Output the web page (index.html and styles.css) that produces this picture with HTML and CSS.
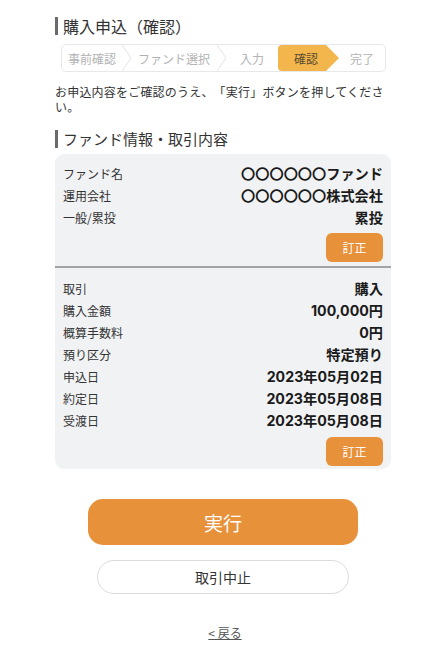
FILE: index.html
```html
<!DOCTYPE html>
<html lang="ja">
<head>
<meta charset="utf-8">
<title>購入申込（確認）</title>
<link rel="stylesheet" href="styles.css">
</head>
<body>
<main class="page">
  <h1 class="heading heading-main">購入申込（確認）</h1>

  <div class="stepper">
    <div class="step step-1">事前確認</div>
    <svg class="chev" viewBox="0 0 9 26" width="9" height="26"><polyline points="0,0 9,13 0,26" fill="none" stroke="#e4e4e4" stroke-width="1"/></svg>
    <div class="step step-2">ファンド選択</div>
    <svg class="chev" viewBox="0 0 9 26" width="9" height="26"><polyline points="0,0 9,13 0,26" fill="none" stroke="#e4e4e4" stroke-width="1"/></svg>
    <div class="step step-3">入力</div>
    <div class="step step-active">確認</div>
    <svg class="arrow" viewBox="0 0 13 26" width="13" height="26"><polygon points="0,0 13,13 0,26" fill="#f3b64c"/></svg>
    <div class="step step-5">完了</div>
  </div>

  <p class="lead">お申込内容をご確認のうえ、「実行」ボタンを押してください。</p>

  <h2 class="heading heading-sub">ファンド情報・取引内容</h2>

  <section class="card">
    <div class="group group-top">
      <div class="row"><span class="label">ファンド名</span><span class="value">〇〇〇〇〇〇ファンド</span></div>
      <div class="row"><span class="label">運用会社</span><span class="value">〇〇〇〇〇〇株式会社</span></div>
      <div class="row"><span class="label">一般/累投</span><span class="value">累投</span></div>
      <div class="actions"><button class="btn-edit">訂正</button></div>
    </div>
    <div class="group group-bottom">
      <div class="row"><span class="label">取引</span><span class="value">購入</span></div>
      <div class="row"><span class="label">購入金額</span><span class="value">100,000円</span></div>
      <div class="row"><span class="label">概算手数料</span><span class="value">0円</span></div>
      <div class="row"><span class="label">預り区分</span><span class="value">特定預り</span></div>
      <div class="row"><span class="label">申込日</span><span class="value">2023年05月02日</span></div>
      <div class="row"><span class="label">約定日</span><span class="value">2023年05月08日</span></div>
      <div class="row"><span class="label">受渡日</span><span class="value">2023年05月08日</span></div>
      <div class="actions"><button class="btn-edit">訂正</button></div>
    </div>
  </section>

  <div class="buttons">
    <button class="btn-primary">実行</button>
    <button class="btn-secondary">取引中止</button>
    <a class="back" href="#">&lt; 戻る</a>
  </div>
</main>
</body>
</html>
```
FILE: styles.css
```css
* { box-sizing: border-box; }

html, body {
  margin: 0;
  padding: 0;
  background: #ffffff;
}

body {
  font-family: "Noto Sans CJK JP", "Noto Sans", sans-serif;
  color: #333333;
  text-spacing-trim: space-all;
}

.page {
  width: 336px;
  margin: 0 auto;
  padding-top: 17px;
}

.heading {
  margin: 0;
  font-weight: normal;
  color: #333333;
  border-left: 3px solid #6a6a6a;
  padding-left: 5px;
  line-height: 18px;
}

.heading-main {
  font-size: 16px;
}

.heading-sub {
  font-size: 15px;
  margin-top: 16px;
}

.stepper {
  display: flex;
  align-items: stretch;
  height: 28px;
  margin: 9px 5px 0 6px;
  border: 1px solid #e8e8e8;
  border-radius: 5px;
  background: #ffffff;
  overflow: hidden;
}

.step {
  display: flex;
  align-items: center;
  justify-content: center;
  font-size: 12px;
  color: #b3b3b3;
  white-space: nowrap;
}

.chev, .arrow {
  flex: none;
  display: block;
}

.step-1 { width: 60px; }
.step-2 { width: 86px; }
.step-3 { width: 52px; }
.step-active {
  width: 48px;
  justify-content: flex-start;
  padding-left: 16px;
  background: #f3b64c;
  color: #5a4a30;
  border-radius: 4px 0 0 4px;
}
.step-5 { flex: 1; }

.lead {
  margin: 12px 0 0;
  font-size: 12px;
  letter-spacing: 0.2px;
  line-height: 15px;
  color: #333333;
  text-spacing-trim: space-all;
}

.card {
  margin-top: 6px;
  background: #f1f2f4;
  border-radius: 9px;
  overflow: hidden;
}

.group {
  padding: 0 8px;
}

.group-top {
  padding-top: 8px;
  padding-bottom: 4px;
  border-bottom: 2px solid #a3a3a3;
}

.group-bottom {
  padding-top: 9px;
  padding-bottom: 3px;
}

.row {
  display: flex;
  justify-content: space-between;
  align-items: center;
  height: 22px;
}

.label {
  font-size: 12px;
  color: #333333;
}

.value {
  font-family: "Inter", "Noto Sans CJK JP", sans-serif;
  font-size: 14.2px;
  font-weight: bold;
  color: #1a1a1a;
}

.actions {
  display: flex;
  justify-content: flex-end;
  margin-top: 5px;
}

.group-bottom .actions {
  margin-top: 6px;
}

.btn-edit {
  width: 57px;
  height: 29px;
  border: none;
  border-radius: 6px;
  background: #e8913b;
  color: #ffffff;
  font-family: "Noto Sans CJK JP", sans-serif;
  font-size: 12px;
  padding: 0;
}

.buttons {
  display: flex;
  flex-direction: column;
  align-items: center;
  margin-top: 30px;
}

.btn-primary {
  width: 270px;
  height: 46px;
  border: none;
  border-radius: 15px;
  background: #e8913b;
  color: #ffffff;
  font-family: "Noto Sans CJK JP", sans-serif;
  font-size: 19px;
  padding: 0;
}

.btn-secondary {
  margin-top: 15px;
  width: 252px;
  height: 34px;
  border: 1px solid #dcdcdc;
  border-radius: 17px;
  background: #ffffff;
  color: #333333;
  font-family: "Noto Sans CJK JP", sans-serif;
  font-size: 14px;
  padding: 0;
}

.back {
  margin-top: 32px;
  margin-left: 4px;
  font-size: 12px;
  line-height: 14px;
  color: #555555;
  text-decoration: underline;
}
```
